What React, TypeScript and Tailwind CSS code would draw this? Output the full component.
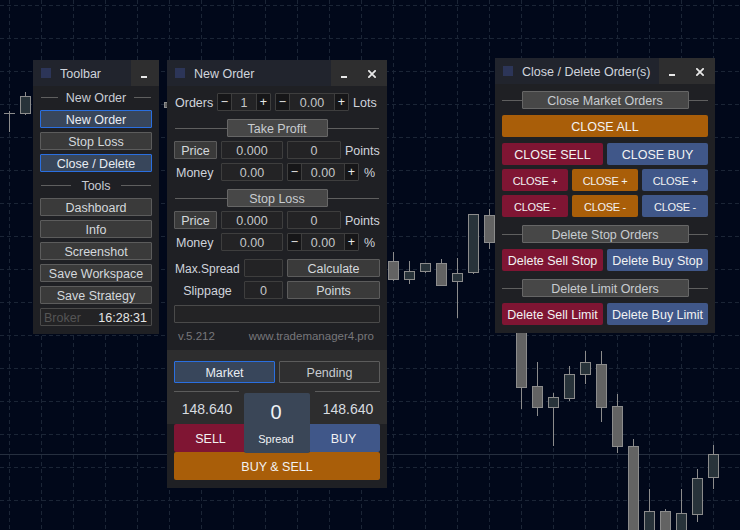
import type { ReactNode } from 'react';

// cx, wick top, body top, body bottom, wick bottom, bull
const candles: [number, number, number, number, number, boolean][] = [
    [25, 92, 96, 113, 115, true],
    [169, 100, 102, 107, 110, false],
    [393, 252, 261, 279, 281, false],
    [409, 261, 271, 279, 284, true],
    [425, 263, 263, 271, 273, true],
    [441, 259, 263, 285, 285, false],
    [457, 258, 273, 281, 318, true],
    [473, 214, 214, 272, 274, true],
    [489, 209, 215, 242, 249, false],
    [521, 320, 320, 387, 409, false],
    [537, 362, 386, 407, 416, false],
    [553, 393, 397, 407, 446, true],
    [569, 366, 374, 398, 401, true],
    [585, 351, 362, 374, 384, true],
    [601, 351, 364, 407, 422, false],
    [617, 394, 406, 446, 453, false],
    [633, 439, 446, 540, 540, false],
    [649, 489, 511, 540, 540, true],
    [665, 509, 511, 540, 540, false],
    [681, 489, 513, 540, 540, true],
    [697, 469, 478, 514, 522, true],
    [713, 445, 454, 477, 489, true],
];

const gridX = Array.from({ length: 23 }, (_, i) => 9 + i * 32);
const gridY = Array.from({ length: 16 }, (_, i) => 5 + i * 33);

function Chart() {
    return (
        <svg className="absolute inset-0" width="740" height="530" shapeRendering="crispEdges">
            {gridX.map((x) => (
                <line key={x} x1={x + 0.5} x2={x + 0.5} y1="0" y2="530" stroke="#1b2536" strokeDasharray="4 3" />
            ))}
            {gridY.map((y) => (
                <line key={y} x1="0" x2="740" y1={y + 0.5} y2={y + 0.5} stroke="#1b2536" strokeDasharray="4 3" />
            ))}
            <line x1="0" x2="740" y1="454.5" y2="454.5" stroke="#262f3f" />
            <line x1="9.5" x2="9.5" y1="111" y2="132" stroke="#8c8c8c" />
            <line x1="4" x2="15" y1="113.5" y2="113.5" stroke="#8c8c8c" />
            {candles.map(([cx, wt, bt, bb, wb, bull]) => (
                <g key={cx}>
                    <line x1={cx + 0.5} x2={cx + 0.5} y1={wt} y2={wb} stroke="#8c8c8c" />
                    <rect
                        x={cx - 5 + 0.5}
                        y={bt + 0.5}
                        width="10"
                        height={bb - bt}
                        fill={bull ? '#28333a' : '#636363'}
                        stroke="#8c8c8c"
                    />
                </g>
            ))}
        </svg>
    );
}

function TitleBar({ title, close, hoverClass }: { title: string; close?: boolean; hoverClass: string }) {
    return (
        <div className="flex h-[26px] shrink-0 items-stretch bg-[#21242d]">
            <div className="ml-[8px] mt-[8px] h-[10px] w-[10px] bg-[#2c3558]" />
            <div className="ml-[9px] flex-1 truncate pt-[2px] text-[12.5px] leading-[25px] text-[#d0d4dc]">{title}</div>
            <div className={`flex items-start bg-[#2e2e2f] ${hoverClass}`}>
                <div className="ml-[10px] mt-[16px] h-[2px] w-[6px] bg-[#e8e8e8]" />
                {close && (
                    <svg className="ml-[21px] mt-[10px]" width="8" height="8" viewBox="0 0 8 8" stroke="#e8e8e8" strokeWidth="1.8">
                        <path d="M0.3 0.3L7.7 7.7M7.7 0.3L0.3 7.7" />
                    </svg>
                )}
            </div>
        </div>
    );
}

function Btn({ children, className = '' }: { children: ReactNode; className?: string }) {
    return (
        <div className={`flex h-[18px] items-center justify-center rounded-[1px] border border-[#5c5c5c] bg-[#3a3a3a] pt-[2px] text-[#d4d8dc] ${className}`}>
            {children}
        </div>
    );
}

function Active({ children, className = '' }: { children: ReactNode; className?: string }) {
    return (
        <div className={`flex items-center justify-center rounded-[1px] border border-[#2a6fe0] bg-[#38465b] pt-[2px] text-[#e8ecf2] ${className}`}>
            {children}
        </div>
    );
}

function Field({ children, className = '' }: { children?: ReactNode; className?: string }) {
    return (
        <div className={`flex h-[18px] items-center justify-center rounded-[1px] border border-[#3e3e3e] bg-[#232325] pt-[2px] text-[#c4c6c8] ${className}`}>
            {children}
        </div>
    );
}

function Stepper({ value, valueClass, className = '' }: { value: string; valueClass: string; className?: string }) {
    return (
        <div className={`flex h-[18px] items-stretch rounded-[1px] border border-[#3e3e3e] bg-[#232325] text-[#c4c6c8] ${className}`}>
            <div className="flex w-[13px] items-center justify-center bg-[#161618] text-[#e8e8e8]">−</div>
            <div className={`flex items-center justify-center border-x border-[#3e3e3e] pt-[2px] ${valueClass}`}>{value}</div>
            <div className="flex w-[13px] items-center justify-center bg-[#161618] text-[#e8e8e8]">+</div>
        </div>
    );
}

function Label({ children, className = '' }: { children: ReactNode; className?: string }) {
    return <span className={`whitespace-nowrap pt-[2px] text-[#d0d4dc] ${className}`}>{children}</span>;
}

function Divider({ children, className = '' }: { children: ReactNode; className?: string }) {
    return (
        <div className={`flex h-[18px] items-center ${className}`}>
            <div className="h-px flex-1 bg-[#5f5f5f]" />
            {children}
            <div className="h-px flex-1 bg-[#5f5f5f]" />
        </div>
    );
}

function SectionBtn({ children, className = '' }: { children: ReactNode; className?: string }) {
    return (
        <div className={`flex h-[18px] items-center justify-center rounded-[1px] border border-[#666] bg-[#474747] pt-[2px] text-[#c8ccd0] ${className}`}>
            {children}
        </div>
    );
}

function Solid({ children, className = '' }: { children: ReactNode; className?: string }) {
    return <div className={`flex h-[22px] items-center justify-center rounded-[2px] pt-[1px] text-[#f2f2f2] ${className}`}>{children}</div>;
}

function Toolbar() {
    return (
        <div className="absolute left-[33px] top-[60px] flex h-[274px] w-[126px] flex-col bg-[#1f2024] text-[12.5px] leading-[16px]">
            <TitleBar title="Toolbar" hoverClass="w-[28px]" />
            <div className="flex flex-col gap-[4px] px-[7px] pt-[2px]">
                <div className="flex h-[18px] items-center gap-[8px] px-[1px] text-[#c8ccd4]">
                    <div className="h-px flex-1 bg-[#5f5f5f]" />
                    <span className="pt-[1px]">New Order</span>
                    <div className="h-px flex-1 bg-[#5f5f5f]" />
                </div>
                <Active className="h-[18px]">New Order</Active>
                <Btn>Stop Loss</Btn>
                <Active className="h-[18px]">Close / Delete</Active>
                <div className="flex h-[18px] items-center gap-[10px] px-[1px] text-[#c8ccd4]">
                    <div className="h-px flex-1 bg-[#5f5f5f]" />
                    <span className="pt-[1px]">Tools</span>
                    <div className="h-px flex-1 bg-[#5f5f5f]" />
                </div>
                <Btn>Dashboard</Btn>
                <Btn>Info</Btn>
                <Btn>Screenshot</Btn>
                <Btn>Save Workspace</Btn>
                <Btn>Save Strategy</Btn>
                <div className="flex h-[18px] items-center justify-between rounded-[1px] border border-[#4a4a4a] bg-[#232325] pl-[3px] pr-[4px] pt-[2px]">
                    <span className="text-[#555]">Broker</span>
                    <span className="text-[#e6e6e6]">16:28:31</span>
                </div>
            </div>
        </div>
    );
}

function OrderLevels({ title }: { title: string }) {
    return (
        <>
            <Divider className="mt-[8px] px-[1px]">
                <SectionBtn className="w-[101px]">{title}</SectionBtn>
            </Divider>
            <div className="mt-[4px] flex h-[18px] items-center gap-[4px]">
                <Btn className="w-[43px]">Price</Btn>
                <Field className="w-[62px]">0.000</Field>
                <Field className="w-[54px]">0</Field>
                <Label>Points</Label>
            </div>
            <div className="mt-[4px] flex h-[18px] items-center gap-[4px]">
                <Label className="w-[43px] pl-[2px]">Money</Label>
                <Field className="w-[62px]">0.00</Field>
                <Stepper value="0.00" valueClass="w-[44px]" className="w-[72px]" />
                <Label className="ml-[1px]">%</Label>
            </div>
        </>
    );
}

function NewOrder() {
    return (
        <div className="absolute left-[167px] top-[60px] flex h-[428px] w-[220px] flex-col bg-[#1f2024] text-[12.5px] leading-[16px]">
            <TitleBar title="New Order" close hoverClass="w-[56px]" />
            <div className="flex h-[264px] shrink-0 flex-col px-[7px] pt-[7px]">
                <div className="flex h-[18px] items-center">
                    <Label className="w-[43px] pl-[1px]">Orders</Label>
                    <Stepper value="1" valueClass="w-[26px]" className="w-[54px]" />
                    <Stepper value="0.00" valueClass="w-[46px]" className="ml-[4px] w-[74px]" />
                    <Label className="ml-[4px]">Lots</Label>
                </div>
                <OrderLevels title="Take Profit" />
                <OrderLevels title="Stop Loss" />
                <div className="mt-[8px] flex h-[18px] items-center gap-[4px]">
                    <Label className="w-[66px] pl-[1px] text-[12px]">Max.Spread</Label>
                    <Field className="w-[39px]" />
                    <Btn className="w-[93px]">Calculate</Btn>
                </div>
                <div className="mt-[4px] flex h-[18px] items-center gap-[4px]">
                    <Label className="w-[66px] pl-[1px] text-center">Slippage</Label>
                    <Field className="w-[39px]">0</Field>
                    <Btn className="w-[93px]">Points</Btn>
                </div>
                <Field className="mt-[6px] w-[206px] border-[#4a4a4a]" />
                <div className="mt-[4px] flex justify-between pl-[4px] pr-[6px] text-[11.5px] leading-[18px] text-[#77777b]">
                    <span>v.5.212</span>
                    <span>www.trademanager4.pro</span>
                </div>
            </div>
            <div className="h-[74px] shrink-0 bg-[#2d2d2e] px-[7px] pt-[11px]">
                <div className="flex gap-[4px]">
                    <Active className="h-[22px] w-[101px]">Market</Active>
                    <div className="flex h-[22px] w-[101px] items-center justify-center rounded-[1px] border border-[#5c5c5c] bg-[#2f2f30] pt-[2px] text-[#c8ccd0]">
                        Pending
                    </div>
                </div>
                <div className="mt-[8px] flex justify-between text-[14px] text-[#d8dce0]">
                    <div className="w-[65px] border-t border-[#5c5c5c] pl-[1px] pt-[9px] text-center leading-[16px]">148.640</div>
                    <div className="w-[65px] border-t border-[#5c5c5c] pl-[1px] pt-[9px] text-center leading-[16px]">148.640</div>
                </div>
            </div>
            <div className="flex flex-col px-[7px]">
                <div className="flex h-[28px]">
                    <div className="flex w-[70px] items-center justify-center rounded-l-[2px] bg-[#7f1533] pl-[3px] pt-[1px] text-[#f2f2f2]">SELL</div>
                    <div className="w-[66px]" />
                    <div className="flex w-[70px] items-center justify-center rounded-r-[2px] bg-[#405789] pr-[3px] pt-[1px] text-[#f2f2f2]">BUY</div>
                </div>
                <div className="flex h-[28px] items-center justify-center rounded-[2px] bg-[#a95e09] pt-[1px] text-[#f2f2f2]">BUY &amp; SELL</div>
            </div>
            <div className="absolute left-[77px] top-[333px] flex h-[60px] w-[66px] flex-col items-center rounded-[2px] bg-[#3a4657] pr-[2px] text-[#f0f2f4]">
                <span className="mt-[8px] text-[20px] leading-[23px]">0</span>
                <span className="mt-[8px] text-[11px] leading-[14px]">Spread</span>
            </div>
        </div>
    );
}

function CloseOrders() {
    return (
        <div className="absolute left-[495px] top-[58px] flex h-[275px] w-[220px] flex-col bg-[#1f2024] text-[12.5px] leading-[16px]">
            <TitleBar title="Close / Delete Order(s)" close hoverClass="w-[56px]" />
            <div className="flex flex-col px-[7px] pt-[7px]">
                <Divider>
                    <SectionBtn className="w-[167px]">Close Market Orders</SectionBtn>
                </Divider>
                <Solid className="mt-[6px] bg-[#a95e09]">CLOSE ALL</Solid>
                <div className="mt-[6px] grid grid-cols-2 gap-[4px]">
                    <Solid className="bg-[#7f1533]">CLOSE SELL</Solid>
                    <Solid className="bg-[#405789]">CLOSE BUY</Solid>
                </div>
                <div className="mt-[4px] grid grid-cols-3 gap-[4px] text-[11px] tracking-[-0.3px]">
                    <Solid className="bg-[#7f1533]">CLOSE +</Solid>
                    <Solid className="bg-[#a95e09]">CLOSE +</Solid>
                    <Solid className="bg-[#405789]">CLOSE +</Solid>
                    <Solid className="bg-[#7f1533]">CLOSE -</Solid>
                    <Solid className="bg-[#a95e09]">CLOSE -</Solid>
                    <Solid className="bg-[#405789]">CLOSE -</Solid>
                </div>
                <Divider className="mt-[8px]">
                    <SectionBtn className="w-[167px]">Delete Stop Orders</SectionBtn>
                </Divider>
                <div className="mt-[6px] grid grid-cols-2 gap-[4px]">
                    <Solid className="bg-[#7f1533]">Delete Sell Stop</Solid>
                    <Solid className="bg-[#405789]">Delete Buy Stop</Solid>
                </div>
                <Divider className="mt-[8px]">
                    <SectionBtn className="w-[167px]">Delete Limit Orders</SectionBtn>
                </Divider>
                <div className="mt-[6px] grid grid-cols-2 gap-[4px]">
                    <Solid className="bg-[#7f1533]">Delete Sell Limit</Solid>
                    <Solid className="bg-[#405789]">Delete Buy Limit</Solid>
                </div>
            </div>
        </div>
    );
}

export default function App() {
    return (
        <div className="relative h-[530px] w-[740px] overflow-hidden bg-[#01081a] [font-family:'Liberation_Sans',Arial,sans-serif]">
            <Chart />
            <Toolbar />
            <NewOrder />
            <CloseOrders />
        </div>
    );
}
